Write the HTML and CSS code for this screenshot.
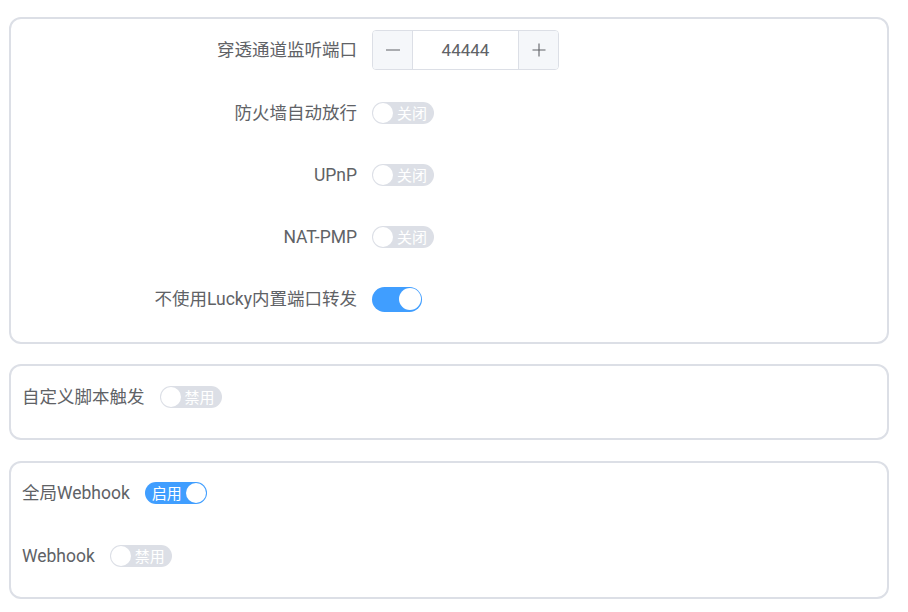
FILE: index.html
```html
<!DOCTYPE html>
<html lang="zh-CN">
<head>
<meta charset="utf-8">
<link rel="stylesheet" href="styles.css">
</head>
<body>
<div class="page">
  <section class="card card-main">
    <div class="row row-first">
      <div class="label">穿透通道监听端口</div>
      <div class="num">
        <span class="num-btn num-minus"><svg width="16" height="16" viewBox="0 0 16 16"><path d="M1 8h14" stroke="#606266" stroke-width="1.1"/></svg></span>
        <span class="num-val">44444</span>
        <span class="num-btn num-plus"><svg width="16" height="16" viewBox="0 0 16 16"><path d="M1.5 8h13M8 1.5v13" stroke="#606266" stroke-width="1.1"/></svg></span>
      </div>
    </div>
    <div class="row">
      <div class="label">防火墙自动放行</div>
      <div class="sw sw-off"><span class="knob"></span><span class="sw-text">关闭</span></div>
    </div>
    <div class="row">
      <div class="label">UPnP</div>
      <div class="sw sw-off"><span class="knob"></span><span class="sw-text">关闭</span></div>
    </div>
    <div class="row">
      <div class="label">NAT-PMP</div>
      <div class="sw sw-off"><span class="knob"></span><span class="sw-text">关闭</span></div>
    </div>
    <div class="row">
      <div class="label">不使用Lucky内置端口转发</div>
      <div class="sw sw-large sw-on"><span class="knob"></span></div>
    </div>
  </section>

  <section class="card card-inline">
    <div class="irow">
      <div class="ilabel">自定义脚本触发</div>
      <div class="sw sw-off"><span class="knob"></span><span class="sw-text">禁用</span></div>
    </div>
  </section>

  <section class="card card-inline card-hook">
    <div class="irow">
      <div class="ilabel">全局Webhook</div>
      <div class="sw sw-on"><span class="sw-text">启用</span><span class="knob"></span></div>
    </div>
    <div class="irow">
      <div class="ilabel">Webhook</div>
      <div class="sw sw-off"><span class="knob"></span><span class="sw-text">禁用</span></div>
    </div>
  </section>
</div>
</body>
</html>
```

FILE: styles.css
```css
* { box-sizing: border-box; }
html, body { margin: 0; padding: 0; background: #fff; }
body {
  font-family: Roboto, "Noto Sans CJK SC", sans-serif;
  color: #606266;
}
.page {
  padding: 17px 19px 0 9px;
  display: flex;
  flex-direction: column;
  gap: 20px;
}
.card {
  border: 2px solid #dcdfe6;
  border-radius: 12px;
  background: #fff;
}
.card-main {
  padding: 11px 0 27px 0;
  display: flex;
  flex-direction: column;
  gap: 30px;
}
.row {
  display: flex;
  align-items: center;
  height: 32px;
  gap: 15px;
}
.row-first {
  height: 40px;
  margin-bottom: -3px;
}
.label {
  width: 346px;
  text-align: right;
  font-size: 17.5px;
  line-height: 32px;
  white-space: nowrap;
}
.num {
  display: flex;
  width: 187px;
  height: 40px;
  border: 1px solid #dcdfe6;
  border-radius: 4px;
  overflow: hidden;
}
.num-btn {
  width: 40px;
  flex: none;
  background: #f5f7fa;
  display: flex;
  align-items: center;
  justify-content: center;
}
.num-minus { border-right: 1px solid #dcdfe6; }
.num-plus { border-left: 1px solid #dcdfe6; }
.num-val {
  flex: 1;
  text-align: center;
  font-size: 17px;
  line-height: 38px;
  color: #606266;
}
.sw {
  display: inline-flex;
  align-items: center;
  height: 22px;
  width: 62px;
  border-radius: 11px;
  padding: 0 1px;
  gap: 4px;
}
.sw-off { background: #dcdfe6; }
.sw-on { background: #409eff; }
.knob {
  width: 20px;
  height: 20px;
  border-radius: 50%;
  background: #fff;
  flex: none;
}
.sw-text {
  color: #fff;
  font-family: "Noto Sans CJK SC", sans-serif;
  font-size: 15px;
  line-height: 22px;
  white-space: nowrap;
}
.sw-on { padding-left: 7px; justify-content: flex-end; }
.sw-large {
  height: 25px;
  width: 50px;
  border-radius: 12.5px;
  padding: 0 1.5px;
}
.sw-large .knob { width: 22px; height: 22px; }
.card-inline {
  padding: 15px 11px 25px 11px;
  display: flex;
  flex-direction: column;
  gap: 31px;
}
.card-hook { padding-top: 14px; margin-top: 1px; }
.irow {
  display: flex;
  align-items: center;
  height: 32px;
  gap: 15px;
}
.ilabel {
  font-size: 17.5px;
  line-height: 32px;
  white-space: nowrap;
}
```
